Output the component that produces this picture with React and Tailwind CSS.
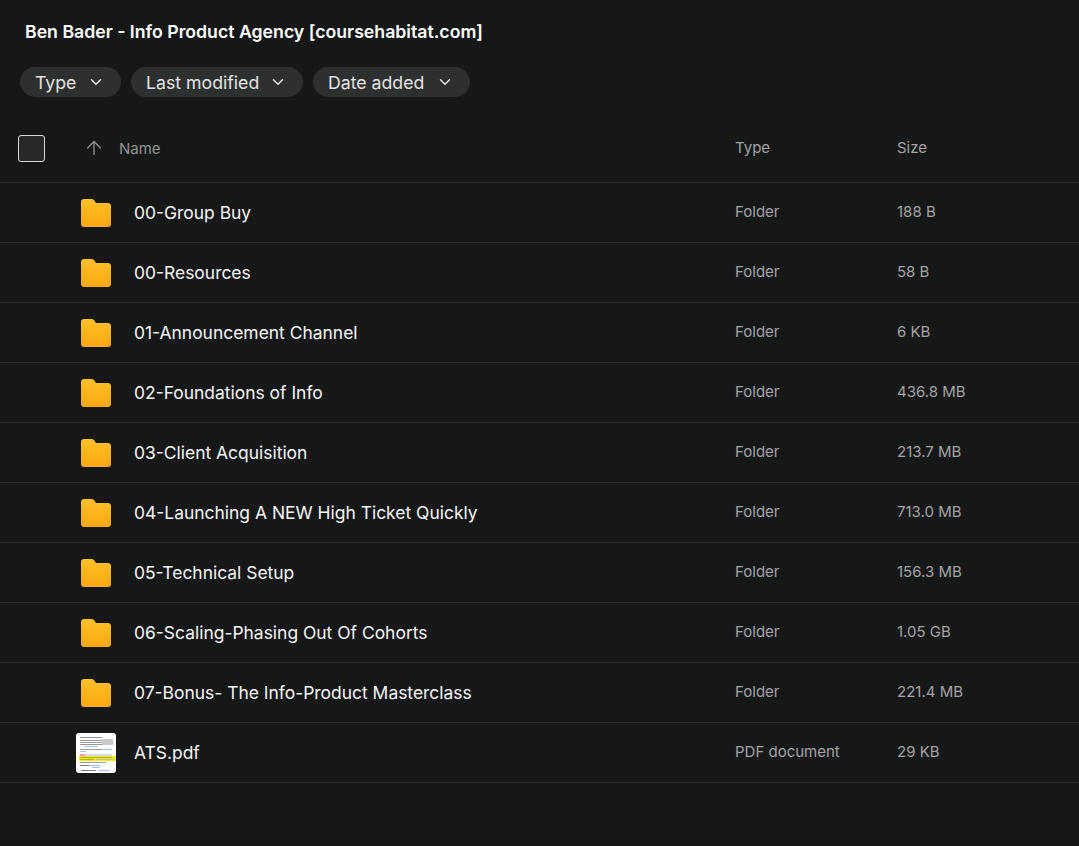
import { ChevronDown, ArrowUp } from 'lucide-react'

const rows = [
  { name: '00-Group Buy', type: 'Folder', size: '188 B' },
  { name: '00-Resources', type: 'Folder', size: '58 B' },
  { name: '01-Announcement Channel', type: 'Folder', size: '6 KB' },
  { name: '02-Foundations of Info', type: 'Folder', size: '436.8 MB' },
  { name: '03-Client Acquisition', type: 'Folder', size: '213.7 MB' },
  { name: '04-Launching A NEW High Ticket Quickly', type: 'Folder', size: '713.0 MB' },
  { name: '05-Technical Setup', type: 'Folder', size: '156.3 MB' },
  { name: '06-Scaling-Phasing Out Of Cohorts', type: 'Folder', size: '1.05 GB' },
  { name: '07-Bonus- The Info-Product Masterclass', type: 'Folder', size: '221.4 MB' },
  { name: 'ATS.pdf', type: 'PDF document', size: '29 KB' },
]

function FolderIcon() {
  return (
    <svg width="30" height="28" viewBox="0 0 30 28" className="block">
      <defs>
        <linearGradient id="folderFill" x1="0" y1="0" x2="0" y2="1">
          <stop offset="0" stopColor="#ffc027" />
          <stop offset="1" stopColor="#fba90f" />
        </linearGradient>
      </defs>
      <path
        d="M3 0h7.500c1.200 0 2 .5 2.800 1.500L15 4h12c1.700 0 3 1.300 3 3v18c0 1.700-1.300 3-3 3H3c-1.700 0-3-1.300-3-3V3c0-1.700 1.300-3 3-3z"
        fill="url(#folderFill)"
      />
    </svg>
  )
}

function PdfThumb() {
  return (
    <svg width="40" height="40" viewBox="0 0 40 40" className="block rounded-[3px] bg-white">
      <g className="blur-[0.4px]">
        <g fill="#9a9a9a">
          <rect x="4" y="4" width="22" height="1" />
          <rect x="4" y="7" width="24" height="1" />
          <rect x="4" y="9" width="32" height="1" />
          <rect x="4" y="11" width="26" height="1" />
          <rect x="4" y="16" width="24" height="1" />
          <rect x="4" y="29" width="26" height="1" />
        </g>
        <rect x="26" y="6" width="11" height="6" fill="#c9c9c9" />
        <g fill="#9cc4ea">
          <rect x="8" y="13" width="14" height="1" />
          <rect x="26" y="16" width="10" height="1" />
          <rect x="4" y="18" width="6" height="1" />
          <rect x="13" y="32" width="12" height="1" />
          <rect x="16" y="34" width="8" height="1" />
          <rect x="22" y="37" width="12" height="1" />
        </g>
        <rect x="4" y="21" width="5" height="2" fill="#f2a0a0" />
        <rect x="9" y="21" width="27" height="2" fill="#d8d8d8" />
        <rect x="3" y="23" width="37" height="5" fill="#f4e81a" />
        <rect x="4" y="24" width="32" height="1" fill="#b5ad30" />
        <rect x="4" y="26" width="14" height="1" fill="#b5ad30" />
        <rect x="20" y="26" width="18" height="1" fill="#a8c0b8" />
        <g fill="#808080">
          <rect x="4" y="32" width="9" height="1" />
          <rect x="5" y="37" width="15" height="1" />
        </g>
      </g>
    </svg>
  )
}

function Pill({ label, className }) {
  return (
    <button className={`flex h-[30px] items-center justify-between rounded-full bg-[#2e3030] pl-[15px] pr-[16px] text-[17.7px] text-[#e3e3e3] ${className}`}>
      <span className="pt-[2px]">{label}</span>
      <ChevronDown size={18} strokeWidth={2} className="text-[#e3e3e3]" />
    </button>
  )
}

export default function App() {
  return (
    <div className="min-h-[846px] bg-[#161818] font-['Inter',sans-serif] text-white">
      <h1 className="pl-[25px] pt-[20px] text-[17.7px] leading-[24px] font-semibold text-white">
        Ben Bader - Info Product Agency [coursehabitat.com]
      </h1>

      <div className="flex gap-[10px] pl-[20px] pt-[23px]">
        <Pill label="Type" className="w-[101px]" />
        <Pill label="Last modified" className="w-[172px]" />
        <Pill label="Date added" className="w-[157px]" />
      </div>

      <div className="mt-[21px] flex h-[65px] items-center border-b border-[#2b2d2d] pb-[4px] text-[15px] text-[#a3a3a3]">
        <div className="w-[83px] shrink-0 pl-[18px]">
          <div className="h-[27px] w-[27px] rounded-[3px] border border-[#d8d8d8] bg-[#26282a]" />
        </div>
        <ArrowUp size={22} strokeWidth={1.5} className="shrink-0 text-[#8f8f8f]" />
        <span className="ml-[14px] w-[616px] shrink-0 pt-[2px] text-[#8f9191]">Name</span>
        <span className="w-[162px] shrink-0">Type</span>
        <span>Size</span>
      </div>

      {rows.map((row) => (
        <div key={row.name} className="flex h-[60px] items-center border-b border-[#2b2d2d] pl-[76px]">
          <div className="flex w-[40px] shrink-0 justify-center">
            {row.type === 'Folder' ? <FolderIcon /> : <PdfThumb />}
          </div>
          <span className="ml-[18px] w-[601px] shrink-0 pt-[2px] text-[17.45px] text-[#f7f7f7]">{row.name}</span>
          <span className="w-[162px] shrink-0 text-[15px] text-[#a3a3a3]">{row.type}</span>
          <span className="text-[15px] text-[#a3a3a3]">{row.size}</span>
        </div>
      ))}
    </div>
  )
}
